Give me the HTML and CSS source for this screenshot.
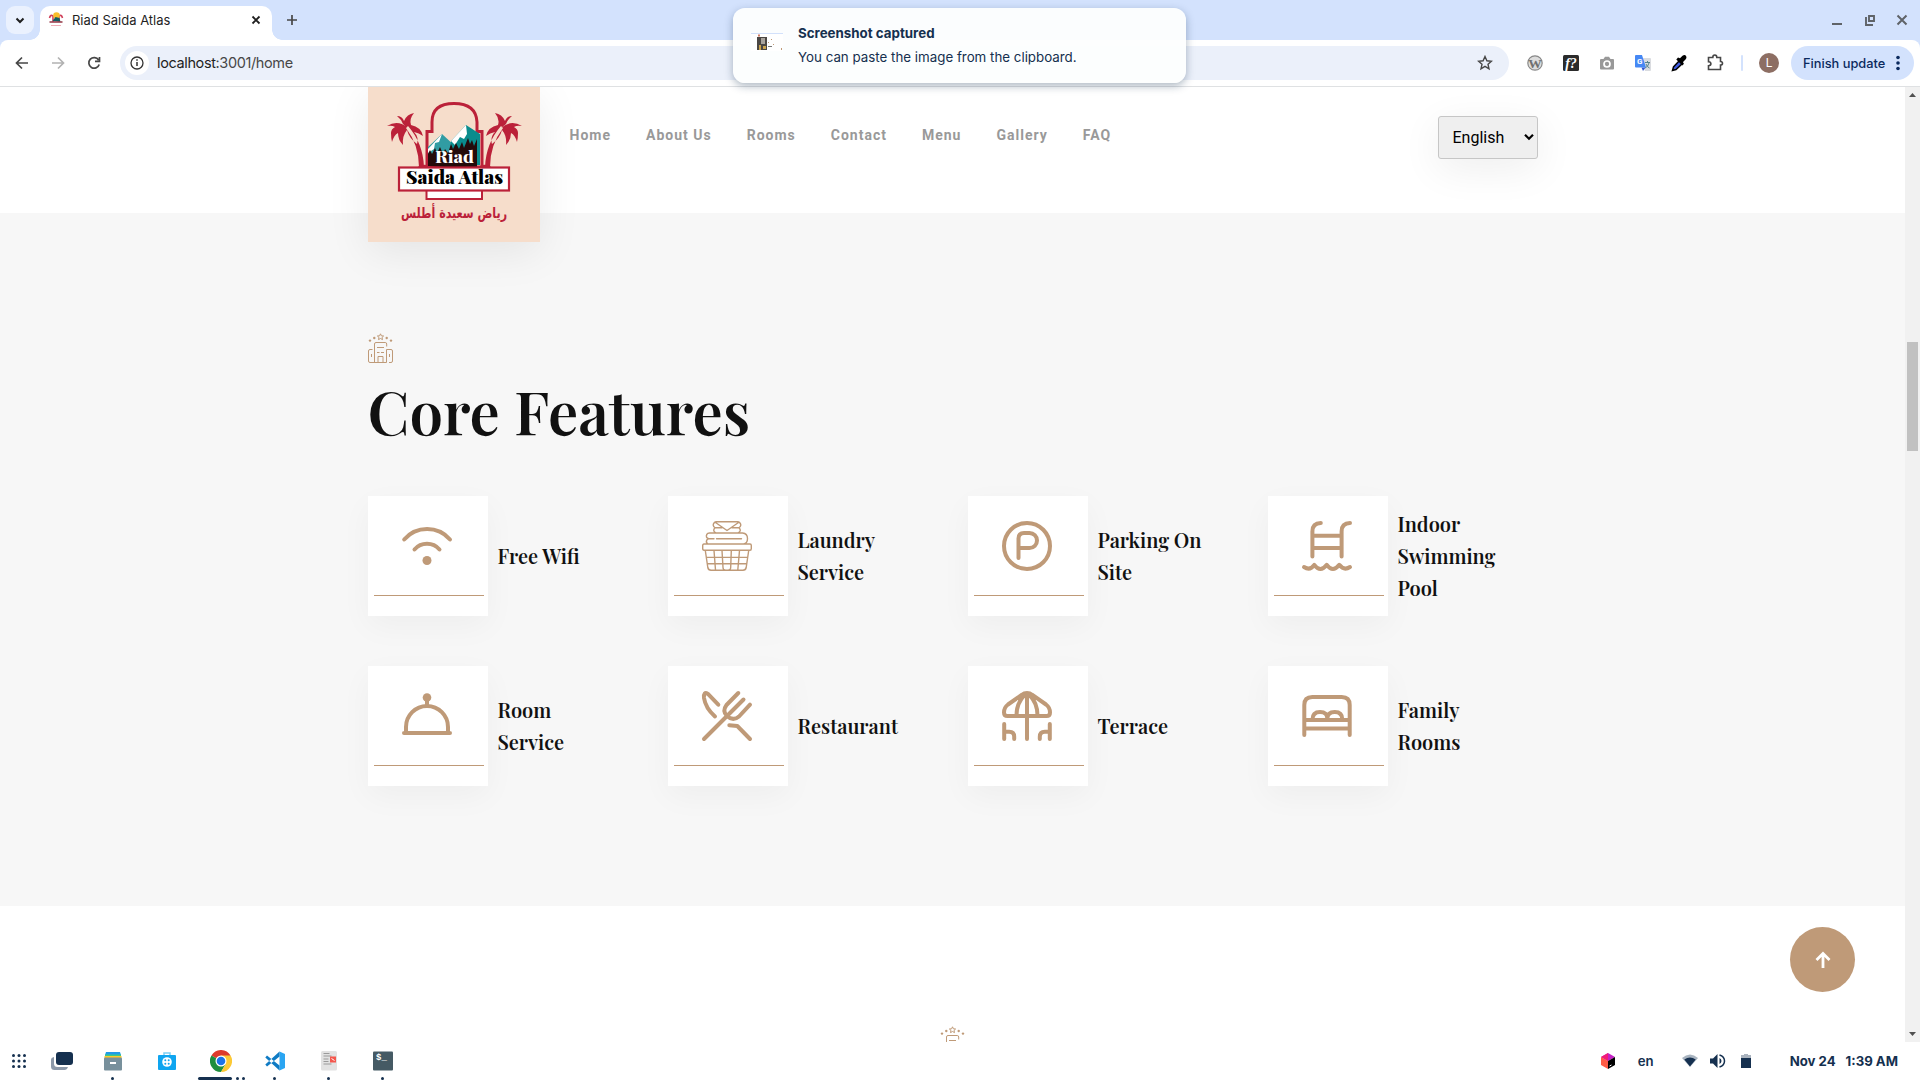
FILE: index.html
```html
<!DOCTYPE html>
<html lang="en">
<head>
<meta charset="utf-8">
<title>Riad Saida Atlas</title>
<link rel="stylesheet" href="styles.css">
</head>
<body>
<svg class="defs" width="0" height="0">
  <symbol id="hotel" viewBox="0 0 25 30">
    <g fill="none" stroke="#bf9a78" stroke-width="1">
      <path d="M12.500 .8l.9 2 2.200.2-1.600 1.500.5 2.100-2-1.100-2 1.100.5-2.100L9.400 3l2.200-.2z"/>
      <path d="M6.500 29.500V11q0-1.500 1.500-1.500h9.200q1.500 0 1.500 1.500v2.500M18.500 16.500V29.500M4.500 16.500H2q-1.500 0-1.500 1.500v10q0 1.500 1.500 1.500h16.500M18.500 16.500H23q1.500 0 1.500 1.500v10q0 1.500-1.500 1.500h-2M9 14.500h7M9 19.500h2.500M13 19.500h3M10 29.500v-6h5v6M3.500 21v3M21.500 21v3"/>
    </g>
    <g fill="#bf9a78"><circle cx="6.300" cy="5" r="1.200"/><circle cx="18.700" cy="5" r="1.200"/><circle cx="2" cy="7.600" r="1.200"/><circle cx="23" cy="7.600" r="1.200"/></g>
  </symbol>
  <symbol id="palm" viewBox="0 0 60 85">
    <path fill="#bb2139" d="M51 80Q51 58 38 41l2-2q15 17 16 41zM40 41Q30 32 19 39q5-1 8 1-4 2-4 6 0 5 1 9 2-7 6-9 0 7 5 12-1-9 4-15 2 8 10 14 2-7-3-12 5 1 9 4-2-9-12-11Q41 32 46 26q-7 1-10 8-2-5-7-5 4 3 6 8z"/>
  </symbol>
</svg>

<div class="screen">
  <header class="tabstrip">
    <div class="tab-search"><svg width="28" height="28" viewBox="0 0 28 28"><path d="M10.500 12.500l3.500 3.500 3.500-3.500" fill="none" stroke="#1f1f1f" stroke-width="2"/></svg></div>
    <div class="tab">
      <svg class="favicon" width="16" height="16" viewBox="0 0 16 16"><path d="M1.500 6q1-4 3.500-2v6M14.500 6q-1-4-3.500-2v6" stroke="#d0405a" fill="none" stroke-width="1.600"/><circle cx="8.500" cy="3.500" r="3.300" fill="#f8bd2c"/><path d="M4.500 9l3-4 4 1 1 4z" fill="#125e63"/><path d="M1.500 10h13" stroke="#9b4250" stroke-width="1.600"/><path d="M3 13.500h10" stroke="#efadb7"/></svg>
      <span class="tab-title">Riad Saida Atlas</span>
      <svg width="12" height="12" viewBox="0 0 12 12"><path d="M2.500 2.500l7 7M9.500 2.500l-7 7" stroke="#1f1f1f" stroke-width="1.800"/></svg>
    </div>
    <svg class="newtab" width="12" height="12" viewBox="0 0 12 12"><path d="M6 1v10M1 6h10" stroke="#474747" stroke-width="1.700"/></svg>
    <div class="winbtns">
      <svg width="12" height="12" viewBox="0 0 12 12"><path d="M1 10h10" stroke="#5f6368" stroke-width="2"/></svg>
      <svg width="12" height="12" viewBox="0 0 12 12"><path d="M5 2h5v5H5zM2 3v8h7" fill="none" stroke="#5f6368" stroke-width="1.900"/></svg>
      <svg width="12" height="12" viewBox="0 0 12 12"><path d="M1.500 1.500l9 9M10.500 1.500l-9 9" stroke="#5f6368" stroke-width="2"/></svg>
    </div>
  </header>

  <div class="toolbar">
    <div class="navbtns">
      <svg width="36" height="20" viewBox="0 0 36 20"><path d="M24 10H13M18 4.500L12.500 10l5.500 5.500" fill="none" stroke="#474747" stroke-width="1.700"/></svg>
      <svg width="36" height="20" viewBox="0 0 36 20"><path d="M12 10h11M18 4.500l5.500 5.500-5.500 5.500" fill="none" stroke="#b2b2b2" stroke-width="1.700"/></svg>
      <svg width="36" height="20" viewBox="0 0 36 20"><path d="M22.600 7A5.300 5.300 0 1 0 23.200 11.500M23.500 4v4.300h-4.500" fill="none" stroke="#474747" stroke-width="1.700"/></svg>
    </div>
    <div class="omnibox">
      <svg width="24" height="24" viewBox="0 0 24 24"><circle cx="12" cy="12" r="12" fill="#fff"/><circle cx="12" cy="12" r="6" fill="none" stroke="#333" stroke-width="1.300"/><path d="M12 11v4M12 8.300v1.500" stroke="#333" stroke-width="1.500"/></svg>
      <span class="url">localhost<i>:3001/home</i></span>
      <svg class="star" width="16" height="16" viewBox="0 0 16 16"><path d="M8 1.500l1.900 4.300 4.600.4-3.500 3.100 1 4.600L8 11.400l-4 2.500 1-4.600L1.500 6.200l4.600-.4z" fill="none" stroke="#474747" stroke-width="1.400"/></svg>
    </div>
    <div class="extensions">
      <svg width="36" height="20" viewBox="0 0 36 20"><circle cx="18" cy="10" r="7.200" fill="#ddd" stroke="#888" stroke-width="1.200"/><text x="18" y="14.500" text-anchor="middle" class="serif" font-size="13.500" font-weight="700" fill="#707070">W</text></svg>
      <svg width="36" height="20" viewBox="0 0 36 20"><rect x="10" y="2" width="16" height="16" rx="1.500" fill="#2b2b2b"/><text x="18" y="14.500" text-anchor="middle" class="serif" font-style="italic" font-weight="700" font-size="14" fill="#fff">f?</text></svg>
      <svg width="36" height="20" viewBox="0 0 36 20"><path d="M12 6h2.500l1.500-2.300h4L21.500 6H24q1 0 1 1v8.500q0 1-1 1H12q-1 0-1-1V7q0-1 1-1z" fill="#999"/><circle cx="18" cy="11" r="3" fill="none" stroke="#fff" stroke-width="1.700"/></svg>
      <svg width="36" height="20" viewBox="0 0 36 20"><path d="M16 5h9q1 0 1 1v11q0 1-1 1h-5z" fill="#dadce0"/><path d="M20 9.500h5M22.500 8v2M24 10q-1 4-4 5M21 11q1 3 3.500 4" stroke="#56858d" fill="none"/><path d="M16.500 14.500h4l-2.500 3.500z" fill="#3455cb"/><path d="M11 2h6l4 12.500H11q-1 0-1-1V3q0-1 1-1z" fill="#4688f4"/><text x="14.700" y="11" text-anchor="middle" class="sans" font-size="8" font-weight="700" fill="#fff">G</text></svg>
      <svg width="36" height="20" viewBox="0 0 36 20"><path d="M11.500 17.500l1-3.500 6-6.500 3 3-6.500 6z" fill="#3f5be0" stroke="#000" stroke-width="1.500"/><path d="M17 4.500l2 .8 2.500-2.500Q24 1 25.300 3.500q.7 1.700-.8 3L22 9l.8 2-1.500 1.500-6-6z" fill="#000"/></svg>
      <svg width="36" height="20" viewBox="0 0 36 20"><path d="M11.500 4.500h4.300q0-2.500 2-2.500t2 2.500h3.700v4q2 0 2 1.800t-2 1.800v4.400h-12v-3.700q2.400-.2 2.400-2t-2.400-2z" fill="none" stroke="#474747" stroke-width="1.600"/></svg>
    </div>
    <div class="divider"></div>
    <div class="avatar">L</div>
    <div class="update">Finish update<svg width="4" height="16" viewBox="0 0 4 16"><g fill="#0b2a5e"><circle cx="2" cy="2.500" r="1.800"/><circle cx="2" cy="8" r="1.800"/><circle cx="2" cy="13.500" r="1.800"/></g></svg></div>
  </div>

  <div class="viewport">
    <main class="page">
      <div class="site-header">
        <a class="logo">
          <svg width="172" height="155" viewBox="0 0 172 155">
            <use href="#palm" width="60" height="85"/>
            <use href="#palm" width="60" height="85" transform="translate(173 0) scale(-1 1)"/>
            <path d="M59 80V44.500h5V35Q64 16.500 86 16.500T109 35v9.500h5V80z" fill="#f6ddcb" stroke="#bb2139" stroke-width="3"/>
            <path d="M60 60l14-13 13 12v19H60z" fill="#319ca3"/>
            <path d="M60 62l14-15-3 8-4 1-1 6-6 4z" fill="#fff"/>
            <path d="M83 54l15-16 14 9v31H82z" fill="#0a8c8d"/>
            <path d="M83 54l15-16 1 9-3 5-4-2-5 8z" fill="#fff"/>
            <path d="M60 79V67l2-4 2 4 3-6 2 5 3-6 3 7 2-5 3 4 3-9 2 5 3-6 3 6 3-7 2 6 4-10 2 6 2-4 2 6 3-7v30z" fill="#240b0b"/>
            <path d="M48 81q5-4 11-3v3zM125 81q-5-4-11-3v3z" fill="#bb2139"/>
            <rect x="58.500" y="103" width="55.500" height="9" fill="#fff" stroke="#bb2139" stroke-width="2"/>
            <rect x="31" y="80.500" width="110" height="23" fill="#fff" stroke="#bb2139" stroke-width="2.200"/>
            <text x="67" y="76" textLength="39" lengthAdjust="spacingAndGlyphs" class="playfair" font-size="17" font-weight="800" fill="#fff">Riad</text>
            <text x="38" y="97" textLength="97" lengthAdjust="spacingAndGlyphs" class="playfair" font-size="18" font-weight="900" fill="#000">Saida Atlas</text>
            <text x="86" y="131" textLength="106" lengthAdjust="spacingAndGlyphs" text-anchor="middle" class="arabic" font-size="15" font-weight="700" fill="#bb2139">رياض سعيدة أطلس</text>
          </svg>
        </a>
        <nav class="menu"><a>Home</a><a>About Us</a><a>Rooms</a><a>Contact</a><a>Menu</a><a>Gallery</a><a>FAQ</a></nav>
        <div class="lang">English<svg width="10" height="8" viewBox="0 0 10 8"><path d="M1 1.800l4 4 4-4" fill="none" stroke="#000" stroke-width="2.200"/></svg></div>
      </div>

      <section class="features">
        <svg width="25" height="30"><use href="#hotel"/></svg>
        <h2>Core Features</h2>
        <div class="grid">
          <div class="feature"><div class="card"><svg class="ico" viewBox="0 0 50 50"><path d="M2.200 18.500a30.400 30.400 0 0 1 45.800 0M12.500 28.500a16.500 16.500 0 0 1 25 0"/><circle cx="25" cy="39.500" r="4.500" class="solid"/></svg></div><h3>Free Wifi</h3></div>
          <div class="feature"><div class="card"><svg class="ico thin" viewBox="0 0 50 50"><path d="M2 23h46q1.300 0 1.300 1.500v3q0 1.800-1.300 1.800H2q-1.300 0-1.300-1.800v-3Q.7 23 2 23zM3.300 29.500l2.500 17q.5 2.700 3.200 2.700h32q2.700 0 3.200-2.700l2.500-17M12 29.500l1.500 19.500M20 29.500l1 17q.2 2.500 2 2.500M29.300 29.500l-.6 17q-.2 2.500-2 2.500M37.500 29.500l-1.700 19.500M4.500 36.400h41M5.400 42.700h39M6 23q-2.500-1.500-1.200-4 1-1.200 2-1.300-3.500-1-2-4.300Q5.500 12 7.500 12h33q5 .5 5 5.500t-4 5.500M7 17.700h5M14.500 17.700h25M14 12q-4-2-1-5.300Q10 4.500 12 2q1-1.200 2.500-1.200h21q1.500 0 2.500 1.200 2 2.500-1 4.700 3 3.300-1 5.300M13 6.700h7M30 6.700h7M13.500 1.500L25 9.500l11.500-8"/></svg></div><h3>Laundry<br>Service</h3></div>
          <div class="feature"><div class="card"><svg class="ico" viewBox="0 0 50 50"><circle cx="25" cy="25" r="23"/><path d="M16.500 37V17.500q0-5.500 5.500-5.500h5.500a7.500 7.500 0 0 1 0 15h-11"/></svg></div><h3>Parking On<br>Site</h3></div>
          <div class="feature"><div class="card"><svg class="ico" viewBox="0 0 50 50"><path d="M18.800 2q-8.400 0-8.400 8.500V35.500M48 2q-8.400 0-8.400 8.500V35.500M10.400 14.700h29.200M10.400 27h29.200M2 46q6 4 10.300-2.200 6 8.400 12.500 0 6 8.400 12.500 0Q42 50 48 46"/></svg></div><h3>Indoor<br>Swimming<br>Pool</h3></div>
          <div class="feature"><div class="card"><svg class="ico" viewBox="0 0 50 50"><path d="M2 42h46M4 41.500V36a21 21 0 0 1 42 0v5.500M25 8v6"/><circle cx="25" cy="6.500" r="4.300" class="solid"/></svg></div><h3>Room<br>Service</h3></div>
          <div class="feature"><div class="card"><svg class="ico" viewBox="0 0 50 50"><path d="M2 48L41.500 8.500M36.300 2L24.500 14q-4.500 6 .5 11 6 5.500 12 .5L48 13.700M16.300 13.700L5.700 2.700Q1.500 .5 2 7q1.500 10 11 18.500M27.300 34.200l8 .8L48 48"/></svg></div><h3>Restaurant</h3></div>
          <div class="feature"><div class="card"><svg class="ico" viewBox="0 0 50 50"><path d="M25 2q3 0 5 1.700L44 13.500q4 3 4 8 0 3.500-3.500 3.500h-39Q2 25 2 21.500q0-5 4-8L20 3.700Q22 2 25 2zM25 3v45M22.500 4Q14.500 12 14.500 24.500M27.500 4q8 8 8 20.500M2.200 33v15M2.200 40.700h5q5 0 5 5V48M47.800 33v15M47.800 40.700h-5q-5 0-5 5V48"/></svg></div><h3>Terrace</h3></div>
          <div class="feature"><div class="card"><svg class="ico" viewBox="0 0 50 50"><path d="M2.300 44V14q0-8 8-8h29.400q8 0 8 8v30M2.300 29h45.400M2.300 37.400h45.400M10.500 28.500q0-7.500 7.500-7.500t7.300 7q0-7 7.500-7t7.500 7.500"/></svg></div><h3>Family<br>Rooms</h3></div>
        </div>
      </section>

      <section class="next"><svg width="25" height="30"><use href="#hotel"/></svg></section>
      <a class="totop"><svg width="18" height="18" viewBox="0 0 18 18"><path d="M9 17V3M2.500 9L9 2.500 15.500 9" fill="none" stroke="#fff" stroke-width="2.800"/></svg></a>
    </main>
    <div class="scrollbar">
      <svg width="15" height="16" viewBox="0 0 15 16"><path d="M4 10l3.500-4 3.500 4z" fill="#505050"/></svg>
      <div class="thumb"></div>
      <svg class="down" width="15" height="16" viewBox="0 0 15 16"><path d="M4 6l3.500 4L11 6z" fill="#505050"/></svg>
    </div>
  </div>

  <footer class="taskbar">
    <svg class="apps" width="14" height="14" viewBox="0 0 14 14"><g fill="#15304f"><circle cx="1.500" cy="1.500" r="1.500"/><circle cx="7" cy="1.500" r="1.500"/><circle cx="12.500" cy="1.500" r="1.500"/><circle cx="1.500" cy="7" r="1.500"/><circle cx="7" cy="7" r="1.500"/><circle cx="12.500" cy="7" r="1.500"/><circle cx="1.500" cy="12.500" r="1.500"/><circle cx="7" cy="12.500" r="1.500"/><circle cx="12.500" cy="12.500" r="1.500"/></g></svg>
    <svg class="tasks" width="22" height="18" viewBox="0 0 22 18"><path d="M0 8q0-2.500 3-3v6.500q0 3.500 3.500 3.500H17q-1 3-3.500 3h-10Q0 18 0 14.500z" fill="#8c99aa"/><rect x="5" y="0" width="17" height="13" rx="3" fill="#15304f"/></svg>
    <div class="dock">
      <div class="app"><svg width="20" height="20" viewBox="0 0 20 20"><path d="M3 1h14l1 3H2z" fill="#1e9be8"/><path d="M2 3.500h16v2H2z" fill="#3dc98a"/><path d="M1.500 5h17v2h-17z" fill="#ffc928"/><rect x="1" y="6.500" width="18" height="13" rx="1" fill="#78909c"/><path d="M7 12h6" stroke="#fff" stroke-width="2"/></svg><b></b></div>
      <div class="app"><svg width="20" height="20" viewBox="0 0 20 20"><path d="M7 5V2h6v3" fill="none" stroke="#7ccff5" stroke-width="1.500"/><rect x="1" y="4" width="18" height="15" rx="1" fill="#0fa5f0"/><circle cx="10" cy="11" r="4.800" fill="#fff"/><g fill="#0fa5f0"><circle cx="8.300" cy="9.300" r="1"/><circle cx="11.700" cy="9.300" r="1"/><circle cx="8.300" cy="12.700" r="1"/><circle cx="11.700" cy="12.700" r="1"/></g></svg></div>
      <div class="app"><svg width="22" height="22" viewBox="0 0 22 22"><path d="M11 11L1.470 5.500A11 11 0 0 1 20.530 5.500z" fill="#dd3b2c"/><path d="M11 11L1.470 5.500A11 11 0 0 0 11 22l4.800-8z" fill="#1e8e3e"/><path d="M11 5.500h9.530A11 11 0 0 1 11 22l4.800-8.300z" fill="#fcc934"/><circle cx="11" cy="11" r="5.500" fill="#fff"/><circle cx="11" cy="11" r="4.300" fill="#1a73e8"/></svg><span class="run"><u></u><b></b><b></b></span></div>
      <div class="app"><svg width="20" height="20" viewBox="0 0 20 20"><path d="M14.500 .5L20 3v14l-5.500 2.500z" fill="#2aa5f2"/><path d="M14.500 5.500L2 15.500.3 13.500 14.500 .5M14.500 14.500L2 4.500.3 6.500l14.200 13" fill="#0f7bc4"/></svg><b></b></div>
      <div class="app"><svg width="16" height="20" viewBox="0 0 16 20"><rect width="16" height="19.500" rx="1.500" fill="#e2e2e2"/><path d="M2.500 2.500h6M2.500 5h8M2.500 8h5M2.500 10.500h5M2.500 13h8" stroke="#9a9a9a" stroke-width="1.200"/><rect x="9" y="5.500" width="6" height="6" fill="#f4574d"/><path d="M10.500 7.500l3 2" stroke="#fff"/></svg><b></b></div>
      <div class="app"><svg width="20" height="20" viewBox="0 0 20 20"><rect y=".5" width="20" height="19" rx="1" fill="#455a64"/><text x="3" y="9" class="mono" font-size="9" font-weight="700" fill="#fff">$_</text></svg><b></b></div>
    </div>
    <div class="tray">
      <svg class="cube" width="14" height="16" viewBox="0 0 14 16"><path d="M0 4l7-4 7 4-7 4z" fill="#c420c5"/><path d="M0 4l7 4v8l-7-4z" fill="#ff5c45"/><path d="M0 4l7-4v8z" fill="#f21b77"/><path d="M7 8l7-4v8l-7 4z" fill="#000"/><path d="M8.500 13l2-1" stroke="#fff"/></svg>
      <span class="kb">en</span>
      <svg class="net" width="16" height="14" viewBox="0 0 16 14"><path d="M0 4q8-7 16 0l-8 9z" fill="#a9b4c0"/><path d="M2.300 5.500Q8 1.500 13.700 5.500L8 12.500z" fill="#15304f"/></svg>
      <svg class="vol" width="16" height="14" viewBox="0 0 16 14"><path d="M0 4.500h3L7.500 0v14L3 9.500H0z" fill="#15304f"/><path d="M9.500 1q5 1.500 5 6t-5 6" fill="none" stroke="#15304f" stroke-width="1.500"/><path d="M9.500 4v6q2-1 2-3t-2-3z" fill="#15304f"/></svg>
      <svg class="bat" width="10" height="14" viewBox="0 0 10 14"><path d="M0 1h3V0h4v1h3v3H0z" fill="#aab3be"/><path d="M0 4h10v10H0z" fill="#15304f"/></svg>
      <span class="date">Nov 24</span><span class="time">1:39 AM</span>
    </div>
  </footer>

  <aside class="toast">
    <svg width="32" height="18" viewBox="0 0 32 18"><path fill="#fff" d="M0 0h32v18H0z"/><path d="M0 .5h32" stroke="#d3e1fb"/><path d="M6 4h10v13H6z" fill="#4b4744"/><path d="M10 5h4v6h-4z" fill="#a8a39c"/><path d="M8 12h2v5H8zM12 13h3v3h-3z" fill="#c9a24c"/><path d="M7 1.500h2v2H7z" fill="#cf7a65"/><path d="M17 13.500h4" stroke="#777"/><path d="M20 6h1v1h-1zM17 9h1v1h-1zM22 11h1v1h-1zM30 15h1v2h-1z" fill="#bf9a78"/></svg>
    <div><strong>Screenshot captured</strong><p>You can paste the image from the clipboard.</p></div>
  </aside>
</div>
</body>
</html>
```
FILE: styles.css
```css
* { box-sizing: border-box; margin: 0; padding: 0; }
body { width: 1920px; height: 1080px; overflow: hidden; font-family: Inter, sans-serif; }
svg { display: block; flex: none; }
.defs { position: absolute; }
.serif { font-family: "Liberation Serif", serif; }
.playfair { font-family: "Playfair Display", "Liberation Serif", serif; }
.sans { font-family: Roboto, sans-serif; }
.mono { font-family: "Liberation Mono", monospace; }
.arabic { font-family: "DejaVu Sans", sans-serif; }
.screen { display: flex; flex-direction: column; height: 1080px; background: #d3e2fd; }

.tabstrip { display: flex; height: 40px; padding-left: 6px; flex: none; }
.tab-search { width: 28px; height: 28px; margin: 6px 6px 0 0; border-radius: 9px; background: #eaf1fe; }
.tab { position: relative; display: flex; align-items: center; width: 232px; height: 34px; margin-top: 6px; padding: 0 10px 6px 8px; border-radius: 10px 10px 0 0; background: #fff; }
.tab::before, .tab::after { content: ""; position: absolute; bottom: 0; width: 10px; height: 10px; }
.tab::before { right: 100%; background: radial-gradient(circle at 0 0, transparent 9.500px, #fff 10px); }
.tab::after { left: 100%; background: radial-gradient(circle at 100% 0, transparent 9.500px, #fff 10px); }
.tab-title { flex: 1; margin-left: 8px; font-size: 13px; color: #1f1f1f; }
.newtab { margin: 14px 0 0 14px; }
.winbtns { display: flex; gap: 20.500px; margin: 14px 12px 0 auto; }

.toolbar { display: flex; align-items: center; height: 47px; padding-right: 6px; flex: none; background: #fff; border-bottom: 1px solid #dfe1e3; border-radius: 8px 8px 0 0; }
.navbtns { display: flex; width: 120px; padding-left: 4px; }
.omnibox { display: flex; align-items: center; width: 1389px; height: 34px; padding: 0 16px 0 5px; border-radius: 17px; background: #ebf0fa; }
.url { flex: 1; margin-left: 8px; padding-bottom: 1px; font-size: 14.500px; letter-spacing: -.38px; color: #1f1f1f; }
.url i { font-style: normal; color: #474747; }
.extensions { display: flex; margin-left: 8px; }
.divider { width: 2px; height: 16px; margin-left: 8px; border-radius: 1px; background: #d3e2fd; }
.avatar { width: 20px; height: 20px; margin: 0 12px 0 16px; border-radius: 50%; background: #8d6e63; color: #fff; font: 12px/20px Roboto, sans-serif; text-align: center; }
.update { display: flex; align-items: center; justify-content: space-between; width: 123px; height: 34px; padding: 0 14px 0 12px; border-radius: 17px; background: #d3e2fd; font-size: 12.800px; font-weight: 500; color: #0b2a5e; white-space: nowrap; }

.viewport { display: flex; height: 955px; flex: none; overflow: hidden; background: #fff; }
.page { position: relative; width: 1905px; height: 955px; overflow: hidden; background: #fff; }
.site-header { position: relative; z-index: 2; display: flex; align-items: flex-start; height: 126px; padding: 0 367px 0 368px; }
.logo { width: 172px; height: 155px; background: #f6ddcb; box-shadow: 0 10px 40px rgba(0,0,0,.08); }
.logo svg { overflow: visible; }
.menu { display: flex; gap: 35px; margin: 38px auto 0 29.500px; font: 700 14px/20px Roboto, sans-serif; letter-spacing: 1px; color: #999; }
.lang { display: flex; align-items: center; justify-content: space-between; width: 100px; height: 43px; margin-top: 29px; padding: 0 3px 1px 13.500px; border: 1px solid #c6c6c6; border-radius: 3px; background: #efefef; box-shadow: 0 10px 40px rgba(0,0,0,.07); font: 16px Roboto, sans-serif; color: #000; }

.features { height: 693px; padding: 120px 337px 0 368px; background: #f7f7f7; }
.features h2 { margin: 14px 0 39px -.5px; height: 80px; font: 600 60px/66px "Playfair Display", "Liberation Serif", serif; color: #111; }
.grid { display: grid; grid-template-columns: repeat(4, 300px); gap: 50px 0; }
.feature { display: flex; align-items: center; gap: 9.400px; }
.card { width: 120px; height: 120px; padding: 25px 4px 20px 6px; background: #fff; box-shadow: 0 10px 30px rgba(0,0,0,.04); }
.card::after { content: ""; display: block; height: 1px; margin-top: 24px; background: #bf9a78; }
.ico { width: 50px; height: 50px; margin-left: 28.300px; fill: none; stroke: #bf9a78; stroke-width: 4; stroke-linecap: round; stroke-linejoin: round; overflow: visible; }
.thin { stroke-width: 1.400; }
.solid { fill: #bf9a78; stroke: none; }
.feature h3 { font: 600 20px/32px "Playfair Display", "Liberation Serif", serif; color: #111; }
.next { display: flex; justify-content: center; padding-top: 120px; }
.totop { position: absolute; right: 50px; bottom: 50px; display: flex; align-items: center; justify-content: center; width: 65px; height: 65px; border-radius: 50%; background: #bf9a78; }

.scrollbar { display: flex; flex-direction: column; width: 15px; background: #f1f1f1; }
.thumb { width: 11px; height: 109px; margin: 239px 2px 0; background: #c1c1c1; }
.down { margin-top: auto; }

.taskbar { display: flex; align-items: center; height: 38px; padding: 0 22px 0 12px; flex: none; background: #fff; font-size: 13.200px; font-weight: 700; color: #15304f; }
.tasks { margin: 0 13px 0 25px; }
.dock { display: flex; height: 38px; }
.app { position: relative; display: flex; align-items: center; justify-content: center; width: 54px; height: 38px; }
.app b { width: 3px; height: 3px; border-radius: 50%; background: #15304f; }
.app > b { position: absolute; bottom: 0; left: 25px; }
.run { position: absolute; bottom: 0; left: 4px; display: flex; gap: 3px; }
.run u { width: 34px; height: 3px; margin-right: 1px; border-radius: 2px; background: #15304f; }
.tray { display: flex; align-items: center; margin-left: auto; padding-bottom: 1px; }
.kb { margin: 0 28px 0 23px; font-weight: 600; }
.vol { margin: 0 15px 0 12px; }
.date { margin: 0 10px 0 39px; }

.toast { position: absolute; left: 733px; top: 8px; z-index: 5; display: flex; width: 453px; height: 75px; padding: 16px 18px; border-radius: 12px; background: rgba(253,254,254,.95); box-shadow: 0 3px 9px rgba(21,48,79,.35); font-size: 13.330px; color: #15304f; }
.toast svg { margin: 9px 15px 0 0; }
.toast strong, .toast p { display: block; line-height: 18px; white-space: nowrap; }
.toast p { margin-top: 6px; }
```
